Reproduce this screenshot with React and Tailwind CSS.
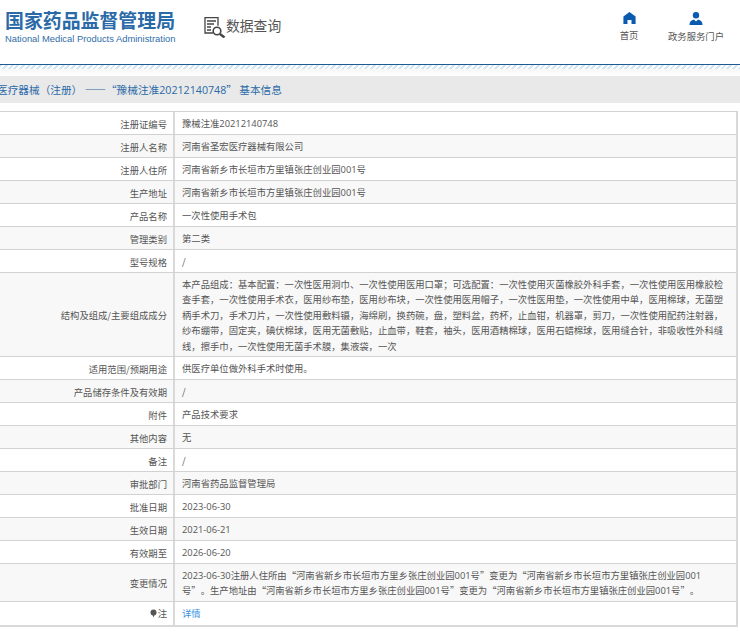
const rows = [
  ["注册证编号", "豫械注准20212140748"],
  ["注册人名称", "河南省圣宏医疗器械有限公司"],
  ["注册人住所", "河南省新乡市长垣市方里镇张庄创业园001号"],
  ["生产地址", "河南省新乡市长垣市方里镇张庄创业园001号"],
  ["产品名称", "一次性使用手术包"],
  ["管理类别", "第二类"],
  ["型号规格", "/"],
  ["结构及组成/主要组成成分", "本产品组成：基本配置：一次性医用洞巾、一次性使用医用口罩；可选配置：一次性使用灭菌橡胶外科手套，一次性使用医用橡胶检查手套，一次性使用手术衣，医用纱布垫，医用纱布块，一次性使用医用帽子，一次性医用垫，一次性使用中单，医用棉球，无菌塑柄手术刀，手术刀片，一次性使用敷料镊，海绵刷，换药碗，盘，塑料盆，药杯，止血钳，机器罩，剪刀，一次性使用配药注射器，纱布绷带，固定夹，碘伏棉球，医用无菌敷贴，止血带，鞋套，袖头，医用酒精棉球，医用石蜡棉球，医用缝合针，非吸收性外科缝线，擦手巾，一次性使用无菌手术膜，集液袋，一次"],
  ["适用范围/预期用途", "供医疗单位做外科手术时使用。"],
  ["产品储存条件及有效期", "/"],
  ["附件", "产品技术要求"],
  ["其他内容", "无"],
  ["备注", "/"],
  ["审批部门", "河南省药品监督管理局"],
  ["批准日期", "2023-06-30"],
  ["生效日期", "2021-06-21"],
  ["有效期至", "2026-06-20"],
  ["变更情况", "2023-06-30注册人住所由“河南省新乡市长垣市方里乡张庄创业园001号”变更为“河南省新乡市长垣市方里镇张庄创业园001号”。生产地址由“河南省新乡市长垣市方里乡张庄创业园001号”变更为“河南省新乡市长垣市方里镇张庄创业园001号”。"],
];

function Txt({ text }) {
  return text.split(/([0-9-]+)/).map((part, i) =>
    i % 2 ? (
      <span key={i} className="font-['Open_Sans',sans-serif]">{part}</span>
    ) : (
      part
    )
  );
}

function DocSearch() {
  return (
    <svg width="22" height="21" viewBox="0 0 22 21" fill="none" stroke="#444" strokeWidth="1.3">
      <path d="M9 16H1V.7h13v8" />
      <path d="M3 4h9M3 7h7M3 10h4M3 13h4" />
      <circle cx="13" cy="14" r="3.8" strokeWidth="1.6" />
      <path d="M16 17l4.5 3.5" strokeWidth="2.4" />
    </svg>
  );
}

function Home() {
  return (
    <svg width="13" height="12" viewBox="0 0 14 13" fill="#0a5ab0">
      <path d="M7 0L0.4 5v8h4.4V8.6h4.4V13h4.4V5z" />
    </svg>
  );
}

function Person() {
  return (
    <svg width="14" height="13" viewBox="0 0 14 13" fill="#0a5ab0">
      <ellipse cx="7" cy="3.2" rx="3.2" ry="3.2" />
      <path d="M0.5 13c0-3.5 1.6-5 4.5-5.6L7 9.5l2-2.1c2.9.6 4.5 2.1 4.5 5.6z" />
    </svg>
  );
}

function Pin() {
  return (
    <svg width="7" height="9" viewBox="0 0 7 9" fill="#555">
      <circle cx="3.5" cy="3.5" r="3" />
      <path d="M2.6 6h1.8L3.5 8.5z" />
    </svg>
  );
}

function Row({ label, value, index }) {
  return (
    <div className={`flex ${index % 2 ? "bg-[#f8f8f8]" : "bg-white"} border-b border-[#d2d2d2]`}>
      <div className="w-[175px] shrink-0 flex items-center justify-end pr-[6px] pt-[1px] border-r-2 border-[#d9d9d9]">
        <span><Txt text={label} /></span>
      </div>
      <div className="flex-1 min-w-0 pl-[7px] pr-[12px] pt-[4px] pb-[2px] leading-[15.4px] min-h-[22px] flex items-center">
        <div><Txt text={value} /></div>
      </div>
    </div>
  );
}

export default function App() {
  return (
    <div lang="zh-CN" className="w-[740px] h-[636px] overflow-hidden bg-white font-['Noto_Sans_CJK_SC','Liberation_Sans',sans-serif] text-[#555] [text-spacing-trim:space-all]">
      <header className="h-[64px] flex justify-between">
        <div className="flex items-start">
          <div className="pl-[5px] pt-[8px] w-[204px]">
            <div className="text-[18.9px] leading-[24px] font-bold text-[#2a6aa8] whitespace-nowrap">国家药品监督管理局</div>
            <div className="text-[9.4px] leading-[12px] mt-[1px] text-[#2f6ea8] font-['Liberation_Sans',sans-serif] whitespace-nowrap">National Medical Products Administration</div>
          </div>
          <div className="flex items-center pt-[17px]">
            <DocSearch />
            <span className="text-[13.8px] leading-[20px] text-[#555] whitespace-nowrap -mt-[6px]">数据查询</span>
          </div>
        </div>
        <nav className="flex pt-[12px] pr-[16px] text-[9.33px] text-[#555]">
          <div className="flex flex-col items-center w-[50px] gap-[4px] mr-[14px]">
            <Home />
            <span>首页</span>
          </div>
          <div className="flex flex-col items-center w-[56px] gap-[4px]">
            <Person />
            <span className="whitespace-nowrap">政务服务门户</span>
          </div>
        </nav>
      </header>
      <div className="h-[1px] bg-[#1f5b93]" />
      <div className="h-[4px] bg-[repeating-linear-gradient(135deg,#d3e6f3_0,#d3e6f3_2px,#ffffff_2px,#ffffff_4px)]" />
      <div className="h-[7px] bg-gradient-to-b from-[#f6f6f6] to-white" />
      <div className="h-[27px] w-[760px] -ml-[3px] bg-[#e9e9e9] flex items-center text-[10.67px] text-[#2a6aa8] whitespace-nowrap">
        <span>医疗器械（注册） ——“豫械注准<span className="font-['Open_Sans',sans-serif]">20212140748</span>” 基本信息</span>
      </div>
      <div className="h-[8px]" />
      <div className="mr-[2px] border-t border-[#d2d2d2] border-r-2 border-r-[#d9d9d9] text-[9.33px]">
        {rows.map(([l, v], i) => (
          <Row key={l} label={l} value={v} index={i} />
        ))}
        <div className="flex border-b-2 border-[#d9d9d9] h-[25px]">
          <div className="w-[175px] shrink-0 flex items-center justify-end pr-[6px] border-r-2 border-[#d9d9d9] gap-[1px]">
            <Pin />
            <span>注</span>
          </div>
          <div className="flex-1 pl-[7px] flex items-center text-[#3b8fe0]">详情</div>
        </div>
      </div>
    </div>
  );
}
